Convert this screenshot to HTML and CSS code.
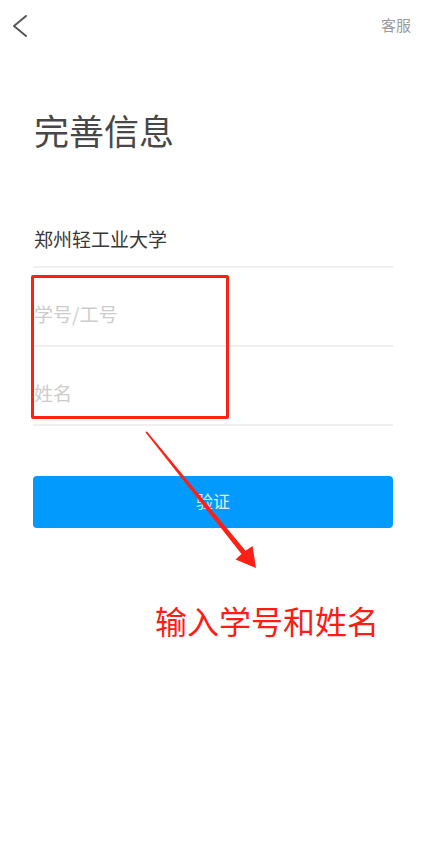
FILE: index.html
```html
<!DOCTYPE html>
<html lang="zh-CN">
<head>
<meta charset="utf-8">
<title>完善信息</title>
<link rel="stylesheet" href="styles.css">
</head>
<body>
<div class="page">
  <header class="topbar">
    <svg class="back" width="24" height="24" viewBox="0 0 24 24"><polyline points="18,2 6,12 18,22" fill="none" stroke="#555" stroke-width="2" stroke-linecap="round" stroke-linejoin="round"/></svg>
    <span class="service">客服</span>
  </header>
  <main class="content">
    <h1 class="title">完善信息</h1>
    <div class="field field-first"><span class="value">郑州轻工业大学</span></div>
    <div class="field"><span class="placeholder">学号/工号</span></div>
    <div class="field"><span class="placeholder">姓名</span></div>
    <button class="submit">验证</button>
  </main>
  <div class="mark-box"></div>
  <svg class="mark-arrow" width="125" height="150" viewBox="0 0 125 150"><polygon points="6,6.5 7.2,6.8 105.5,125.8 112.5,121 116,143 95.5,134.5 101.5,129 5.6,7.6" fill="#ff2015"/></svg>
  <div class="mark-text">输入学号和姓名</div>
</div>
</body>
</html>
```
FILE: styles.css
```css
* { box-sizing: border-box; }
html, body { margin: 0; padding: 0; background: #fff; }
body { font-family: "Noto Sans CJK SC", "Noto Sans", sans-serif; }
.page { position: relative; width: 426px; height: 857px; overflow: hidden; }
.topbar { height: 52px; display: flex; align-items: center; justify-content: space-between; padding: 0 15px 0 8px; }
.back { display: block; }
.service { font-size: 15px; line-height: 20px; color: #9a9a9a; margin-bottom: 3px; }
.content { padding: 0 33px; }
.title { margin: 60px 0 79px 1px; font-size: 35px; line-height: 36px; font-weight: 400; color: #484848; }
.field { border-bottom: 2px solid #efefef; padding: 34px 0 19px 1px; }
.field-first { padding-top: 0; padding-bottom: 15px; }
.value, .placeholder { display: block; font-size: 19px; line-height: 24px; }
.value { color: #383838; }
.placeholder { color: #cccccc; }
.submit { display: block; width: 100%; height: 52px; margin-top: 50px; padding: 0 0 3px; border: none; border-radius: 4px; background: #039afe; color: rgba(255,255,255,0.85); font-family: inherit; font-size: 17px; }
.mark-box { position: absolute; left: 31px; top: 275px; width: 198px; height: 144px; border: 3px solid #ff2015; border-radius: 2px; }
.mark-arrow { position: absolute; left: 140px; top: 425px; }
.mark-text { position: absolute; left: 155px; top: 602px; font-size: 32px; line-height: 36px; color: #ff1c14; }
```
